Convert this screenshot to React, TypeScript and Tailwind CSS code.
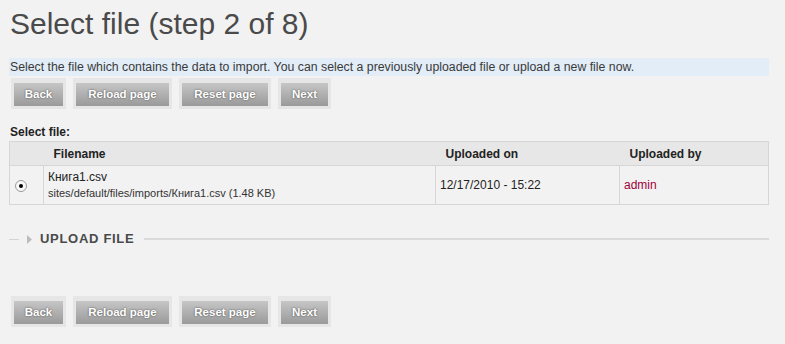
import React from 'react';

const buttons = [
  { label: 'Back', w: 'w-[49px]' },
  { label: 'Reload page', w: 'w-[93px]' },
  { label: 'Reset page', w: 'w-[86px]' },
  { label: 'Next', w: 'w-[47px]' },
];

function ButtonRow({ className }: { className?: string }) {
  return (
    <div className={`flex gap-[7px] ${className ?? ''}`}>
      {buttons.map((b) => (
        <div key={b.label} className="bg-[#e6e6e6] p-[3px]">
          <button
            className={`${b.w} h-[23px] bg-linear-to-b from-[#c6c6c6] to-[#9a9a9a] text-white text-[11.5px] font-bold leading-[23px] text-center [text-shadow:0_0_2px_#444]`}
          >
            {b.label}
          </button>
        </div>
      ))}
    </div>
  );
}

export default function App() {
  return (
    <div className="min-h-screen bg-[#f2f2f2] font-['Liberation_Sans',Arial,sans-serif] text-[#333] pl-[9px] pr-[16px] pt-[6px]">
      <h1 className="text-[30px] leading-[36px] text-[#4a4a4a] ml-[1px]">Select file (step 2 of 8)</h1>

      <p className="mt-[16px] bg-[#e2edf8] text-[12.3px] leading-[18px] px-[1px] text-[#3a3a3a]">
        Select the file which contains the data to import. You can select a previously uploaded file or upload a new file now.
      </p>

      <ButtonRow className="mt-[2px] ml-[2px]" />

      <div className="mt-[15px] text-[12px] font-bold leading-[16px] ml-[1px] text-[#222]">Select file:</div>

      <table className="mt-[1px] w-full table-fixed border-collapse border border-[#d6d6d6]">
        <colgroup>
          <col className="w-[34px]" />
          <col className="w-[392px]" />
          <col className="w-[184px]" />
          <col />
        </colgroup>
        <thead>
          <tr className="bg-[#e7e7e7] h-[24px] border-b border-[#d6d6d6]">
            <th></th>
            <th className="text-left pl-[10px] text-[12px] font-bold text-[#222]">Filename</th>
            <th className="text-left pl-[10px] text-[12px] font-bold text-[#222]">Uploaded on</th>
            <th className="text-left pl-[10px] text-[12px] font-bold text-[#222]">Uploaded by</th>
          </tr>
        </thead>
        <tbody>
          <tr className="h-[39px]">
            <td className="border-r border-[#d6d6d6] pl-[5px]">
              <span className="flex w-[12px] h-[12px] rounded-full border border-[#9a9a9a] bg-[#f8f8f8] items-center justify-center mt-[1px]">
                <span className="w-[4px] h-[4px] rounded-full bg-black" />
              </span>
            </td>
            <td className="border-r border-[#d6d6d6] pl-[4px] align-middle">
              <div className="text-[12px] leading-[16px] text-[#222]">Книга1.csv</div>
              <div className="text-[11px] leading-[16px] text-[#333]">sites/default/files/imports/Книга1.csv (1.48 KB)</div>
            </td>
            <td className="border-r border-[#d6d6d6] pl-[4px] text-[12px] text-[#222]">12/17/2010 - 15:22</td>
            <td className="pl-[4px] text-[12px] text-[#a0003a]">admin</td>
          </tr>
        </tbody>
      </table>

      <div className="mt-[24px] h-[20px] flex items-center">
        <div className="w-[10px] h-px bg-[#d4d4d4]" />
        <svg width="5" height="9" viewBox="0 0 5 9" className="ml-[8px]">
          <polygon points="0,0 5,4.5 0,9" fill="#bdbdbd" />
        </svg>
        <span className="ml-[8px] text-[13px] font-bold tracking-[0.7px] text-[#4a4a4a] leading-[20px]">UPLOAD FILE</span>
        <div className="flex-1 ml-[10px] h-[2px] bg-[#dadada]" />
      </div>

      <ButtonRow className="mt-[47px] ml-[2px]" />
    </div>
  );
}
